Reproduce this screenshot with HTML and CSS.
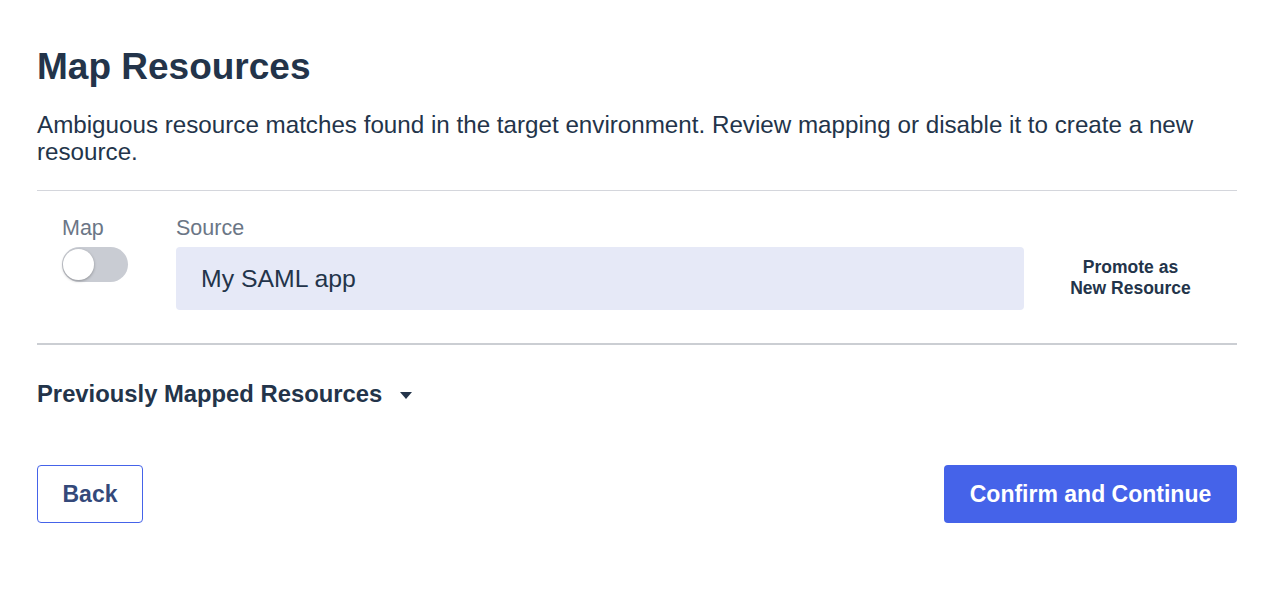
FILE: index.html
```html
<!DOCTYPE html>
<html lang="en">
<head>
    <meta charset="UTF-8">
    <meta name="viewport" content="width=device-width, initial-scale=1.0">
    <title>Map Resources</title>
    <link rel="stylesheet" href="styles.css">
</head>
<body>
    <div class="page">
        <h1>Map Resources</h1>
        <p class="intro">Ambiguous resource matches found in the target environment. Review mapping or disable it to create a new resource.</p>

        <!-- Mapping row -->
        <div class="map-row">
            <div class="map-col">
                <div class="label">Map</div>
                <label class="toggle">
                    <input type="checkbox">
                    <span class="knob"></span>
                </label>
            </div>
            <div class="source-col">
                <div class="label">Source</div>
                <div class="source-box">My SAML app</div>
            </div>
            <div class="promote">Promote as<br>New Resource</div>
        </div>

        <div class="previous">
            <span>Previously Mapped Resources</span>
            <svg class="caret" width="12" height="7" viewBox="0 0 12 7"><path d="M0 0h12L6 7z" fill="#23344a"/></svg>
        </div>

        <div class="actions">
            <button class="secondary-btn">Back</button>
            <button class="primary-btn">Confirm and Continue</button>
        </div>
    </div>
</body>
</html>
```

FILE: styles.css
```css
:root {
    --text: #23344a;
    --muted: #6b7686;
    --primary: #4563e9;
    --line: #d4d6dc;
}

body {
    margin: 0;
    font-family: 'Liberation Sans', Arial, sans-serif;
    color: var(--text);
    background: white;
}

.page {
    padding: 44px 29px 0 37px;
}

h1 {
    margin: 0;
    font-size: 37px;
    line-height: 46px;
    font-weight: 700;
}

.intro {
    margin: 21px 0 0;
    font-size: 24.2px;
    line-height: 27px;
    padding-bottom: 25px;
    border-bottom: 1px solid var(--line);
}

.map-row {
    display: flex;
    align-items: flex-start;
    padding: 25px 0 33px;
    border-bottom: 2px solid #cbced3;
}

.label {
    color: var(--muted);
    font-size: 21.5px;
    line-height: 24px;
    margin-bottom: 7px;
}

.map-col {
    width: 139px;
    padding-left: 25px;
    box-sizing: border-box;
}

.toggle {
    display: block;
    position: relative;
    width: 66px;
    height: 35px;
    border-radius: 18px;
    background: #c9ccd3;
}

.toggle input {
    display: none;
}

.knob {
    position: absolute;
    left: 1px;
    top: 2px;
    width: 31px;
    height: 31px;
    border-radius: 50%;
    background: white;
    box-shadow: 0 1px 3px rgba(0, 0, 0, 0.3);
}

.source-col {
    flex: 1;
}

.source-box {
    background: #e6e9f7;
    border-radius: 4px;
    height: 63px;
    line-height: 63px;
    padding-left: 25px;
    font-size: 24.8px;
}

.promote {
    width: 213px;
    text-align: center;
    font-weight: 700;
    font-size: 17.5px;
    line-height: 21px;
    margin-top: 41px;
}

.previous {
    display: flex;
    align-items: center;
    gap: 18px;
    margin-top: 36px;
    font-size: 23.8px;
    font-weight: 700;
    line-height: 26px;
}

.caret {
    margin-top: 2px;
}

.actions {
    display: flex;
    justify-content: space-between;
    margin-top: 58px;
}

button {
    font-family: inherit;
    font-size: 23px;
    height: 58px;
    border-radius: 4px;
    font-weight: 700;
    cursor: pointer;
}

.secondary-btn {
    width: 106px;
    background: white;
    border: 1px solid var(--primary);
    color: #34497a;
}

.primary-btn {
    width: 293px;
    background: var(--primary);
    border: none;
    color: white;
}
```
